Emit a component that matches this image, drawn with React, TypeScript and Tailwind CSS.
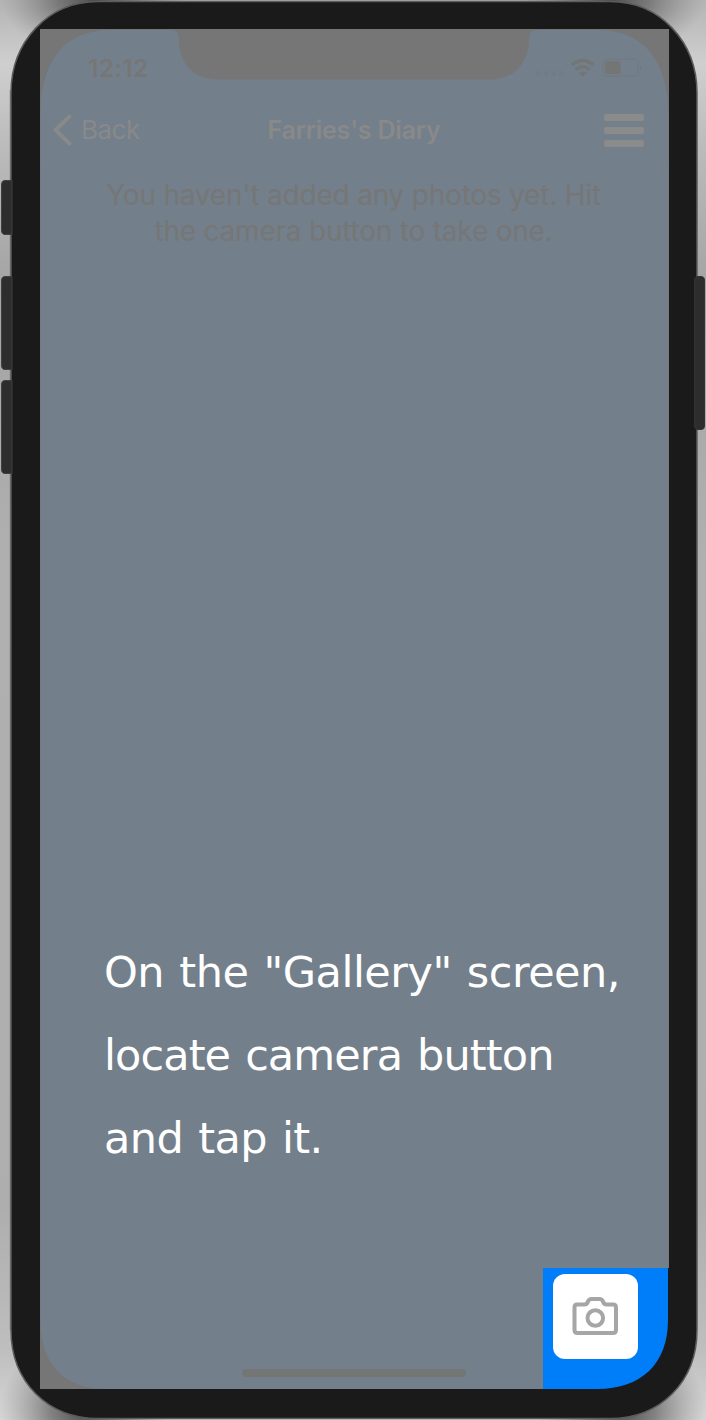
import React from "react";

const Hardware = () => (
  <svg className="absolute inset-0" width="706" height="1420" viewBox="0 0 706 1420" aria-hidden="true">
    <defs>
      <linearGradient id="side" x1="0" y1="0" x2="0" y2="1">
        <stop offset="0" stopColor="#b4b4b4" />
        <stop offset="0.045" stopColor="#cfcfcf" />
        <stop offset="0.1" stopColor="#bcbcbc" />
        <stop offset="0.2" stopColor="#a4a4a4" />
        <stop offset="0.4" stopColor="#b0b0b0" />
        <stop offset="0.85" stopColor="#aeaeae" />
        <stop offset="0.95" stopColor="#bebebe" />
        <stop offset="1" stopColor="#d6d6d6" />
      </linearGradient>
      <linearGradient id="edge" x1="0" y1="0" x2="1" y2="0">
        <stop offset="0" stopColor="#888" stopOpacity="0" />
        <stop offset="1" stopColor="#777" stopOpacity="0.8" />
      </linearGradient>
      <radialGradient id="shade">
        <stop offset="0" stopColor="#4c4c4c" stopOpacity="1" />
        <stop offset="0.4" stopColor="#666" stopOpacity="0.75" />
        <stop offset="1" stopColor="#888" stopOpacity="0" />
      </radialGradient>
    </defs>
    <rect width="706" height="1420" fill="url(#side)" />
    <ellipse cx="95" cy="0" rx="95" ry="55" fill="url(#shade)" />
    <ellipse cx="611" cy="0" rx="95" ry="55" fill="url(#shade)" />
    <ellipse cx="85" cy="1410" rx="85" ry="75" fill="url(#shade)" />
    <ellipse cx="621" cy="1410" rx="85" ry="75" fill="url(#shade)" />
    <rect x="8.500" y="90" width="3" height="1240" fill="url(#edge)" />
    <path d="M98 1.500H610C660 1.500 697 42 697 93V1330C697 1382 660 1418.500 610 1418.500H98C48 1418.500 11 1382 11 1330V93C11 42 48 1.500 98 1.500Z" fill="#1a1a1a" stroke="#5c5c5c" strokeWidth="1.500" />
    <g fill="#2d2d2d" stroke="#414141" strokeWidth="1">
      <path d="M12 180.500H5Q1.500 180.500 1.500 185V230Q1.500 234.500 5 234.500H12Z" />
      <path d="M12 276.500H5Q1.500 276.500 1.500 281V365Q1.500 369.500 5 369.500H12Z" />
      <path d="M12 380.500H5Q1.500 380.500 1.500 385V469Q1.500 473.500 5 473.500H12Z" />
      <rect x="694.500" y="276.500" width="10" height="153" rx="3.500" stroke="#333" />
    </g>
  </svg>
);

const Backdrop = () => (
  <svg className="absolute inset-0" width="629" height="1360" viewBox="40 29 629 1360" aria-hidden="true">
    <path d="M40 29H669V1389H40Z" fill="#767676" />
    <path d="M40.500 115C40.500 60 65 30 110 30H171Q179 30 179 39C179 65 195 79.500 218 79.500H490C512 79.500 529 65 529 39Q529 30 537 30H598C643 30 668.500 60 668.500 115V1310C668.500 1360 650 1389 598 1389H105C65 1389 40.500 1365 40.500 1320Z" fill="#737f8b" />
    <path d="M542 1268H669V1389H542Z" fill="#1a1a1a" />
    <path d="M543 1268H668V1320C668 1363 642 1389 597 1389H543Z" fill="#007df9" />
    <path d="M542 1268H543V1389H542Z" fill="#737f8b" />
  </svg>
);

const StatusIcons = () => (
  <svg width="108" height="22" viewBox="534 56 108 22" aria-hidden="true">
    <g fill="#707d84">
      <circle cx="538" cy="73.500" r="2.500" />
      <circle cx="546" cy="73.500" r="2.500" />
      <circle cx="553.500" cy="73.500" r="2.500" />
      <circle cx="561" cy="73.500" r="2.500" />
    </g>
    <g fill="none" stroke="#747575" strokeWidth="3.500">
      <path d="M572 64.800Q582.700 56.200 593.400 64.800" />
      <path d="M575.800 69.700Q582.700 63.800 589.600 69.700" />
    </g>
    <path d="M578.800 73Q582.700 69.800 586.600 73L582.700 76.500Z" fill="#747575" />
    <rect x="602.700" y="59.200" width="35.500" height="17" rx="4" fill="none" stroke="#737b80" strokeWidth="1.300" />
    <rect x="605" y="61.200" width="15.500" height="12.800" rx="1.800" fill="#747575" />
    <path d="M640 65Q643.500 67.700 640 70.500Z" fill="#737a7e" />
  </svg>
);

export default function App() {
  return (
    <main className="relative h-[1420px] w-[706px] overflow-hidden pl-10 pt-[29px] font-['Inter',sans-serif]">
      <Hardware />
      <section className="relative flex h-[1360px] w-[629px] flex-col">
        <Backdrop />
        <div className="relative flex h-[65px] items-start justify-between pl-12 pr-[27px] pt-[24px]">
          <time className="text-[24.500px] font-semibold leading-[30px] tracking-[0.3px] text-[#767676]">12:12</time>
          <div className="pt-[3px]"><StatusIcons /></div>
        </div>
        <header className="relative grid h-[70px] grid-cols-[1fr_auto_1fr] items-center border-b border-[#7a7f85] px-3 pt-[3px]">
          <button className="flex items-center gap-[9px] text-[26px] leading-8 tracking-[-0.5px] text-[#898989]">
            <svg width="20" height="32" viewBox="0 0 20 32" fill="none" stroke="currentColor" strokeWidth="4" strokeLinecap="round" strokeLinejoin="round"><path d="M17.500 2.500L3.500 16L17.500 29.500" /></svg>
            <span>Back</span>
          </button>
          <h1 className="-ml-px text-[25px] font-semibold leading-8 tracking-[-0.2px] text-[#898989]">Farries's Diary</h1>
          <button aria-label="Menu" className="mr-[13px] flex flex-col gap-1.5 justify-self-end">
            <span className="h-[7px] w-10 rounded-[2px] bg-[#8b8b8b]" />
            <span className="h-[7px] w-10 rounded-[2px] bg-[#8b8b8b]" />
            <span className="h-[7px] w-10 rounded-[2px] bg-[#8b8b8b]" />
          </button>
        </header>
        <p className="relative mt-[13px] pr-[2px] text-center text-[28px] leading-9 tracking-[-0.210px] text-[#767676]">
          <span className="block">You haven't added any photos yet. Hit</span>
          <span className="block">the camera button to take one.</span>
        </p>
        <p className="relative mt-[682px] pl-16 font-['DejaVu_Sans',sans-serif] text-[43px] leading-[83px] text-white">
          <span className="block w-max whitespace-nowrap tracking-[-0.5px] [word-spacing:2px]">On the "Gallery" screen,</span>
          <span className="block w-max whitespace-nowrap tracking-[-0.9px] [word-spacing:2.200px]">locate camera button</span>
          <span className="block w-max whitespace-nowrap tracking-[-0.6px] [word-spacing:2px]">and tap it.</span>
        </p>
        <div className="relative mt-auto flex h-[121px] justify-end pr-[31px] pt-[6px]">
          <button aria-label="Take photo" className="flex h-[85px] w-[85px] items-center justify-center rounded-[12px] bg-white pb-[2px] pr-[2px]">
            <svg width="46" height="38" viewBox="571 1297 46 38" fill="none" stroke="#a6a6a6" strokeWidth="4" strokeLinejoin="round"><path d="M576 1304.500H583.500Q586 1304.500 587 1301.500Q588 1299 590.500 1299H598.500Q601 1299 602 1301.500Q603 1304.500 605.500 1304.500H612Q615 1304.500 615 1307.500V1330Q615 1333 612 1333H576.500Q573.500 1333 573.500 1330V1307.500Q573.500 1304.500 576 1304.500Z" /><circle cx="594.300" cy="1318" r="7.800" /></svg>
          </button>
        </div>
        <div className="absolute bottom-[12px] left-[202px] h-[8px] w-[224px] rounded-full bg-[#747575]" />
      </section>
    </main>
  );
}
